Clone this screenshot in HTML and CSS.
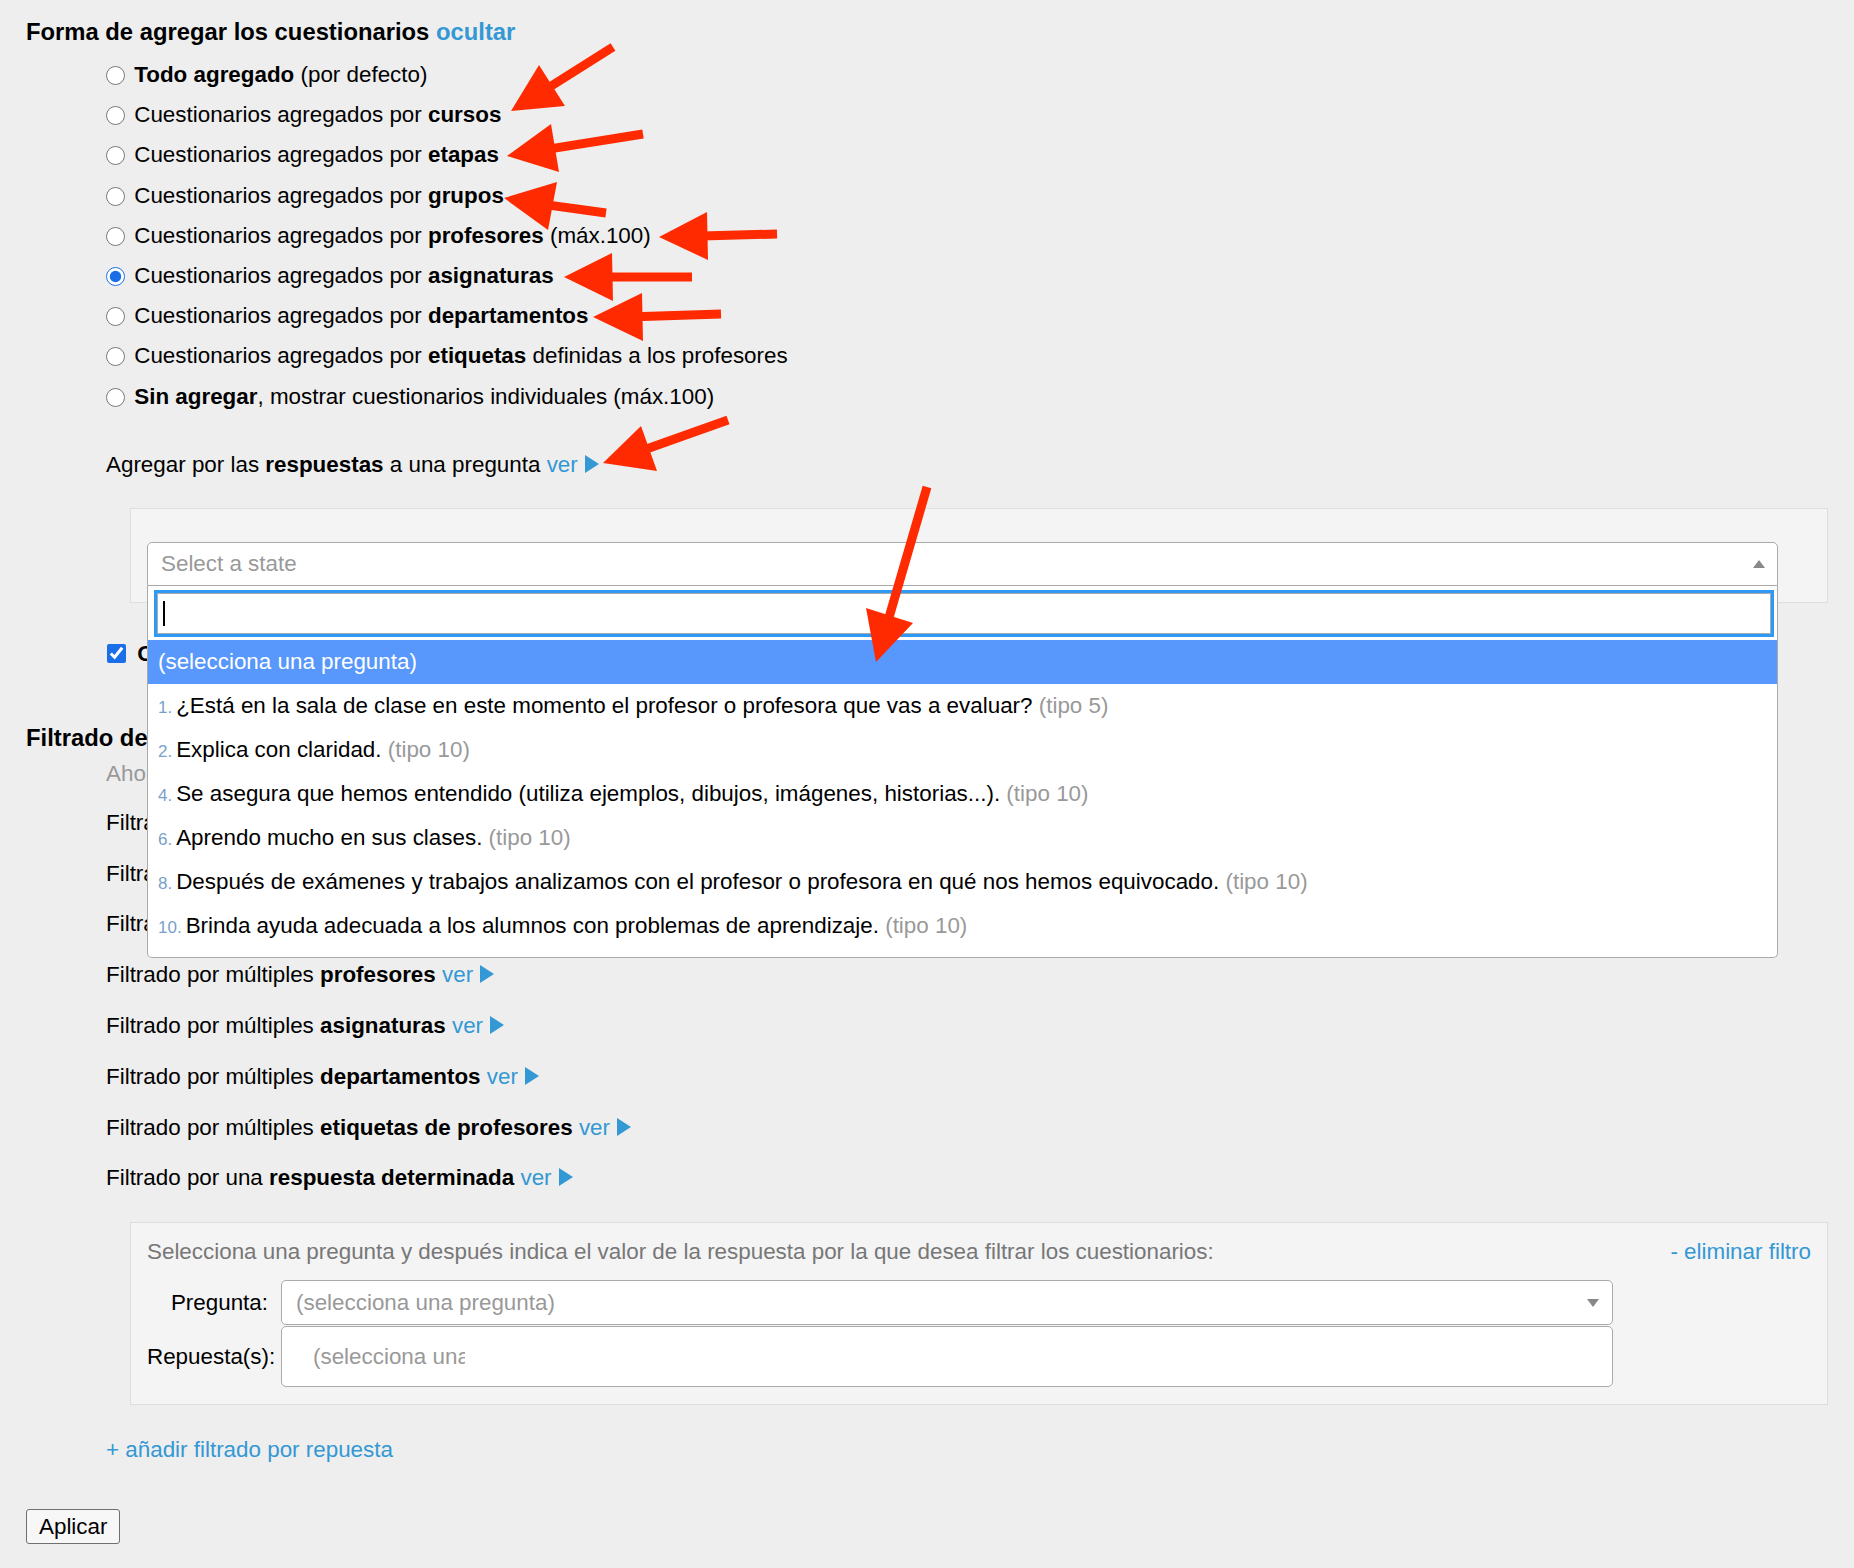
FILE: index.html
```html
<!DOCTYPE html>
<html lang="es">
<head>
    <meta charset="UTF-8">
    <meta name="viewport" content="width=device-width, initial-scale=1.0">
    <title>Informe de cuestionarios</title>
    <link rel="stylesheet" href="styles.css">
</head>
<body>

    <div class="page">
        <!-- Agregado -->
        <h3 class="section-title">Forma de agregar los cuestionarios <a href="#">ocultar</a></h3>

        <div class="options">
            <label class="option"><input type="radio" name="agregado"> <b>Todo agregado</b> (por defecto)</label>
            <label class="option"><input type="radio" name="agregado"> Cuestionarios agregados por <b>cursos</b></label>
            <label class="option"><input type="radio" name="agregado"> Cuestionarios agregados por <b>etapas</b></label>
            <label class="option"><input type="radio" name="agregado"> Cuestionarios agregados por <b>grupos</b></label>
            <label class="option"><input type="radio" name="agregado"> Cuestionarios agregados por <b>profesores</b> (máx.100)</label>
            <label class="option"><input type="radio" name="agregado" checked> Cuestionarios agregados por <b>asignaturas</b></label>
            <label class="option"><input type="radio" name="agregado"> Cuestionarios agregados por <b>departamentos</b></label>
            <label class="option"><input type="radio" name="agregado"> Cuestionarios agregados por <b>etiquetas</b> definidas a los profesores</label>
            <label class="option"><input type="radio" name="agregado"> <b>Sin agregar</b>, mostrar cuestionarios individuales (máx.100)</label>
        </div>

        <div class="toggle first">Agregar por las <b>respuestas</b> a una pregunta <a href="#">ver</a> <span class="tri"></span></div>

        <div class="panel answers-panel">
            <div class="state-select">
                <div class="selection">
                    <span>Select a state</span>
                    <span class="arrow-up"></span>
                </div>
                <div class="dropdown">
                    <div class="search">
                        <div class="search-field"><span class="caret"></span></div>
                    </div>
                    <ul class="results">
                        <li class="highlighted">(selecciona una pregunta)</li>
                        <li><span class="num">1.</span>¿Está en la sala de clase en este momento el profesor o profesora que vas a evaluar? <span class="tipo">(tipo 5)</span></li>
                        <li><span class="num">2.</span>Explica con claridad. <span class="tipo">(tipo 10)</span></li>
                        <li><span class="num">4.</span>Se asegura que hemos entendido (utiliza ejemplos, dibujos, imágenes, historias...). <span class="tipo">(tipo 10)</span></li>
                        <li><span class="num">6.</span>Aprendo mucho en sus clases. <span class="tipo">(tipo 10)</span></li>
                        <li><span class="num">8.</span>Después de exámenes y trabajos analizamos con el profesor o profesora en qué nos hemos equivocado. <span class="tipo">(tipo 10)</span></li>
                        <li><span class="num">10.</span>Brinda ayuda adecuada a los alumnos con problemas de aprendizaje. <span class="tipo">(tipo 10)</span></li>
                    </ul>
                </div>
            </div>
        </div>

        <label class="check-row"><input type="checkbox" checked> <b>Ocultar preguntas</b></label>

        <!-- Filtrado -->
        <h3 class="section-title second">Filtrado de los cuestionarios</h3>
        <div class="hint">Ahora se muestran todos los cuestionarios</div>

        <div class="toggle">Filtrado por múltiples <b>cursos</b> <a href="#">ver</a> <span class="tri"></span></div>
        <div class="toggle">Filtrado por múltiples <b>etapas</b> <a href="#">ver</a> <span class="tri"></span></div>
        <div class="toggle">Filtrado por múltiples <b>grupos</b> <a href="#">ver</a> <span class="tri"></span></div>
        <div class="toggle">Filtrado por múltiples <b>profesores</b> <a href="#">ver</a> <span class="tri"></span></div>
        <div class="toggle">Filtrado por múltiples <b>asignaturas</b> <a href="#">ver</a> <span class="tri"></span></div>
        <div class="toggle">Filtrado por múltiples <b>departamentos</b> <a href="#">ver</a> <span class="tri"></span></div>
        <div class="toggle">Filtrado por múltiples <b>etiquetas de profesores</b> <a href="#">ver</a> <span class="tri"></span></div>
        <div class="toggle">Filtrado por una <b>respuesta determinada</b> <a href="#">ver</a> <span class="tri"></span></div>

        <div class="panel filter-panel">
            <div class="filter-head">
                <span>Selecciona una pregunta y después indica el valor de la respuesta por la que desea filtrar los cuestionarios:</span>
                <a href="#">- eliminar filtro</a>
            </div>
            <div class="filter-grid">
                <div class="label label-question">Pregunta:</div>
                <div class="single-select">
                    <span>(selecciona una pregunta)</span>
                    <span class="arrow-down"></span>
                </div>
                <div class="label">Repuesta(s):</div>
                <div class="multi-select">
                    <span class="multi-placeholder">(selecciona una pregunta)</span>
                </div>
            </div>
        </div>

        <a href="#" class="add-link">+ añadir filtrado por repuesta</a>

        <button type="submit" class="apply">Aplicar</button>
    </div>

    <!-- Flechas de anotación -->
    <svg class="marks" width="1854" height="1568" viewBox="0 0 1854 1568">
        <g stroke="#ff2a00" stroke-width="9" fill="none">
            <line x1="613" y1="47" x2="539.7" y2="93.2"/>
            <line x1="643" y1="134" x2="540.6" y2="150.4"/>
            <line x1="606" y1="213" x2="538" y2="203.6"/>
            <line x1="777" y1="234" x2="693" y2="236.3"/>
            <line x1="692" y1="277" x2="598" y2="277"/>
            <line x1="721" y1="314" x2="627.6" y2="317"/>
            <line x1="728" y1="420" x2="635.2" y2="452.9"/>
            <line x1="927" y1="487" x2="885.5" y2="629.5"/>
        </g>
        <g fill="#ff2a00">
            <polygon points="511,111 539,65 565,106"/>
            <polygon points="507,156 551,124 559,172"/>
            <polygon points="504,198 557,182 548,230"/>
            <polygon points="659,237 707,212 708,260"/>
            <polygon points="564,277 612,253 613,301"/>
            <polygon points="593,317 642,293 643,341"/>
            <polygon points="603,463 641,426 657,471"/>
            <polygon points="876,662 866,608 913,623"/>
        </g>
    </svg>

</body>
</html>
```

FILE: styles.css
```css
/* Page */
body {
    margin: 0;
    background: #eeeeee;
    font-family: "Liberation Sans", Arial, Helvetica, sans-serif;
    font-size: 22.4px;
    color: #000;
}

.page {
    padding: 14px 26px 40px;
}

a {
    color: #3498d4;
    text-decoration: none;
}

.section-title {
    margin: 0;
    font-size: 23.8px;
    line-height: 36px;
    font-weight: bold;
}

.section-title.second {
    margin-top: 46px;
}

/* Radio list */
.options {
    margin: 5px 0 0 80px;
}

.option {
    display: block;
    line-height: 40.2px;
}

.option input {
    width: 19px;
    height: 19px;
    margin: 0 3px 0 0;
    vertical-align: -3px;
    accent-color: #1a6fe8;
}

/* "ver" toggles */
.toggle {
    margin: 10.8px 0 0 80px;
    line-height: 40px;
    height: 40px;
}

.toggle.first {
    margin-top: 28.4px;
}

.tri {
    display: inline-block;
    width: 0;
    height: 0;
    border-left: 14px solid #3498d4;
    border-top: 9px solid transparent;
    border-bottom: 9px solid transparent;
    vertical-align: -1px;
    margin-left: 1px;
}

/* Grey boxes */
.panel {
    background: #f4f4f4;
    border: 1px solid #dedede;
    margin-left: 104px;
}

.answers-panel {
    margin-top: 22.6px;
    padding: 33px 49px 16px 16px;
}

/* Select2 like control, open */
.state-select {
    position: relative;
}

.selection {
    height: 44px;
    box-sizing: border-box;
    border: 1px solid #aaa;
    border-radius: 5px 5px 0 0;
    background: #fff;
    color: #999;
    display: flex;
    align-items: center;
    justify-content: space-between;
    padding: 0 12px 0 13px;
}

.arrow-up {
    border-left: 6px solid transparent;
    border-right: 6px solid transparent;
    border-bottom: 8px solid #888;
}

.dropdown {
    position: absolute;
    top: 100%;
    left: 0;
    right: 0;
    z-index: 10;
    background: #fff;
    border: 1px solid #aaa;
    border-top: none;
    border-radius: 0 0 5px 5px;
    padding-bottom: 9px;
}

.search {
    padding: 7px 6px 6px 9px;
}

.search-field {
    height: 41px;
    box-sizing: border-box;
    border: 1px solid #aaa;
    box-shadow: 0 0 0 3px #2e9af5;
    display: flex;
    align-items: center;
    padding-left: 5px;
}

.caret {
    width: 2px;
    height: 25px;
    background: #000;
}

.results {
    list-style: none;
    margin: 0;
    padding: 0;
}

.results li {
    height: 44px;
    line-height: 44px;
    padding: 0 10px;
    white-space: nowrap;
}

.results li.highlighted {
    background: #5897fb;
    color: #fff;
}

.num {
    font-size: 17px;
    color: #7a9fca;
    margin-right: 4px;
}

.tipo {
    color: #999;
}

/* Checkbox row */
.check-row {
    display: block;
    margin: 31.2px 0 0 80px;
    line-height: 40px;
}

.check-row input {
    width: 19px;
    height: 19px;
    margin: 0 5px 0 1px;
    vertical-align: -2px;
    accent-color: #1a6fe8;
}

.hint {
    margin-left: 80px;
    line-height: 36px;
    color: #999;
}

/* Filter by answer */
.filter-panel {
    margin-top: 23.8px;
    padding: 14px 16px 17px 16px;
}

.filter-head {
    display: flex;
    justify-content: space-between;
    line-height: 30px;
    color: #777;
    margin-bottom: 13px;
}

.filter-grid {
    display: grid;
    grid-template-columns: 134px 1332px;
    row-gap: 1px;
}

.label {
    align-self: center;
    text-align: right;
    padding-right: 8px;
}

.label-question {
    padding-right: 13px;
}

.single-select {
    height: 45px;
    box-sizing: border-box;
    border: 1px solid #aaa;
    border-radius: 5px;
    background: #fff;
    color: #999;
    display: flex;
    align-items: center;
    justify-content: space-between;
    padding: 0 13px 0 14px;
}

.arrow-down {
    border-left: 6px solid transparent;
    border-right: 6px solid transparent;
    border-top: 8px solid #888;
}

.multi-select {
    height: 61px;
    box-sizing: border-box;
    border: 1px solid #aaa;
    border-radius: 5px;
    background: #fff;
    display: flex;
    align-items: center;
    padding-left: 31px;
}

.multi-placeholder {
    width: 152px;
    overflow: hidden;
    white-space: nowrap;
    color: #999;
}

.add-link {
    display: block;
    width: max-content;
    margin: 25px 0 0 80px;
    line-height: 40px;
}

.apply {
    display: block;
    margin-top: 39px;
    height: 35px;
    padding: 0 12px;
    font-family: inherit;
    font-size: 22.4px;
    background: #f7f7f7;
    border: 1px solid #6f6f6f;
    border-radius: 3px;
    color: #000;
}

/* Annotation layer */
.marks {
    position: absolute;
    top: 0;
    left: 0;
    z-index: 20;
    pointer-events: none;
}
```
